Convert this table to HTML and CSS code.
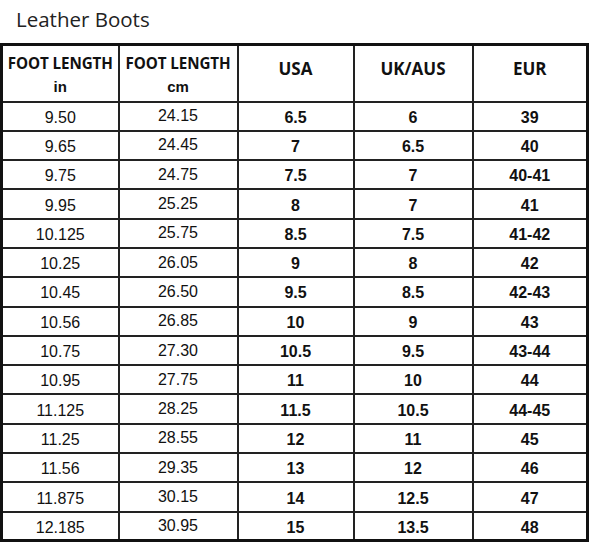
FILE: index.html
```html
<!DOCTYPE html>
<html>
<head>
<meta charset="utf-8">
<link rel="stylesheet" href="styles.css">
</head>
<body>
<div class="title">Leather Boots</div>
<table class="chart">
<colgroup><col class="c1"><col class="c2"><col class="c3"><col class="c4"><col class="c5"></colgroup>
<thead>
<tr>
<th><span class="fl">FOOT LENGTH</span><span class="unit">in</span></th>
<th><span class="fl">FOOT LENGTH</span><span class="unit">cm</span></th>
<th class="big">USA</th>
<th class="big">UK/AUS</th>
<th class="big">EUR</th>
</tr>
</thead>
<tbody>
<tr><td>9.50</td><td class="cm">24.15</td><td class="b">6.5</td><td class="b">6</td><td class="b">39</td></tr>
<tr><td>9.65</td><td class="cm">24.45</td><td class="b">7</td><td class="b">6.5</td><td class="b">40</td></tr>
<tr><td>9.75</td><td class="cm">24.75</td><td class="b">7.5</td><td class="b">7</td><td class="b">40-41</td></tr>
<tr><td>9.95</td><td class="cm">25.25</td><td class="b">8</td><td class="b">7</td><td class="b">41</td></tr>
<tr><td>10.125</td><td class="cm">25.75</td><td class="b">8.5</td><td class="b">7.5</td><td class="b">41-42</td></tr>
<tr><td>10.25</td><td class="cm">26.05</td><td class="b">9</td><td class="b">8</td><td class="b">42</td></tr>
<tr><td>10.45</td><td class="cm">26.50</td><td class="b">9.5</td><td class="b">8.5</td><td class="b">42-43</td></tr>
<tr><td>10.56</td><td class="cm">26.85</td><td class="b">10</td><td class="b">9</td><td class="b">43</td></tr>
<tr><td>10.75</td><td class="cm">27.30</td><td class="b">10.5</td><td class="b">9.5</td><td class="b">43-44</td></tr>
<tr><td>10.95</td><td class="cm">27.75</td><td class="b">11</td><td class="b">10</td><td class="b">44</td></tr>
<tr><td>11.125</td><td class="cm">28.25</td><td class="b">11.5</td><td class="b">10.5</td><td class="b">44-45</td></tr>
<tr><td>11.25</td><td class="cm">28.55</td><td class="b">12</td><td class="b">11</td><td class="b">45</td></tr>
<tr><td>11.56</td><td class="cm">29.35</td><td class="b">13</td><td class="b">12</td><td class="b">46</td></tr>
<tr><td>11.875</td><td class="cm">30.15</td><td class="b">14</td><td class="b">12.5</td><td class="b">47</td></tr>
<tr><td>12.185</td><td class="cm">30.95</td><td class="b">15</td><td class="b">13.5</td><td class="b">48</td></tr>
</tbody>
</table>
</body>
</html>
```
FILE: styles.css
```css
html, body {
  margin: 0;
  padding: 0;
  background: #fff;
}
body {
  width: 590px;
  height: 544px;
  overflow: hidden;
  color: #111;
}
.title {
  font-family: "Open Sans", sans-serif;
  font-size: 20.5px;
  line-height: 24px;
  color: #222;
  padding: 7px 0 0 16px;
  height: 36px;
  box-sizing: border-box;
}
.chart {
  border-collapse: collapse;
  table-layout: fixed;
  width: 589px;
  margin-top: 7px;
  border: 3px solid #111;
}
.c1 { width: 117px; }
.c2 { width: 119px; }
.c3 { width: 116px; }
.c4 { width: 119px; }
.c5 { width: 115px; }
.chart th, .chart td {
  border: 2px solid #222;
  text-align: center;
  padding: 0;
}
.chart thead tr { height: 57px; }
.chart tbody tr { height: 29.3px; }
.chart th {
  vertical-align: top;
}
.fl {
  display: block;
  font-family: "Open Sans", sans-serif;
  font-weight: 700;
  font-size: 15.2px;
  line-height: 18px;
  padding-top: 8px;
  white-space: nowrap;
  letter-spacing: -0.1px;
}
.unit {
  display: block;
  font-family: "Liberation Sans", Arial, sans-serif;
  font-weight: 700;
  font-size: 15px;
  line-height: 18px;
  padding-top: 6px;
}
.chart th.big {
  font-family: "Open Sans", sans-serif;
  font-weight: 700;
  font-size: 17px;
  line-height: 20px;
  padding-top: 13px;
}
.chart td {
  font-family: "Liberation Sans", Arial, sans-serif;
  font-size: 16px;
  line-height: 18px;
  vertical-align: middle;
  padding-top: 3px;
}
.chart td.cm {
  padding-top: 0;
}
.chart td.b {
  font-weight: 700;
}
```
